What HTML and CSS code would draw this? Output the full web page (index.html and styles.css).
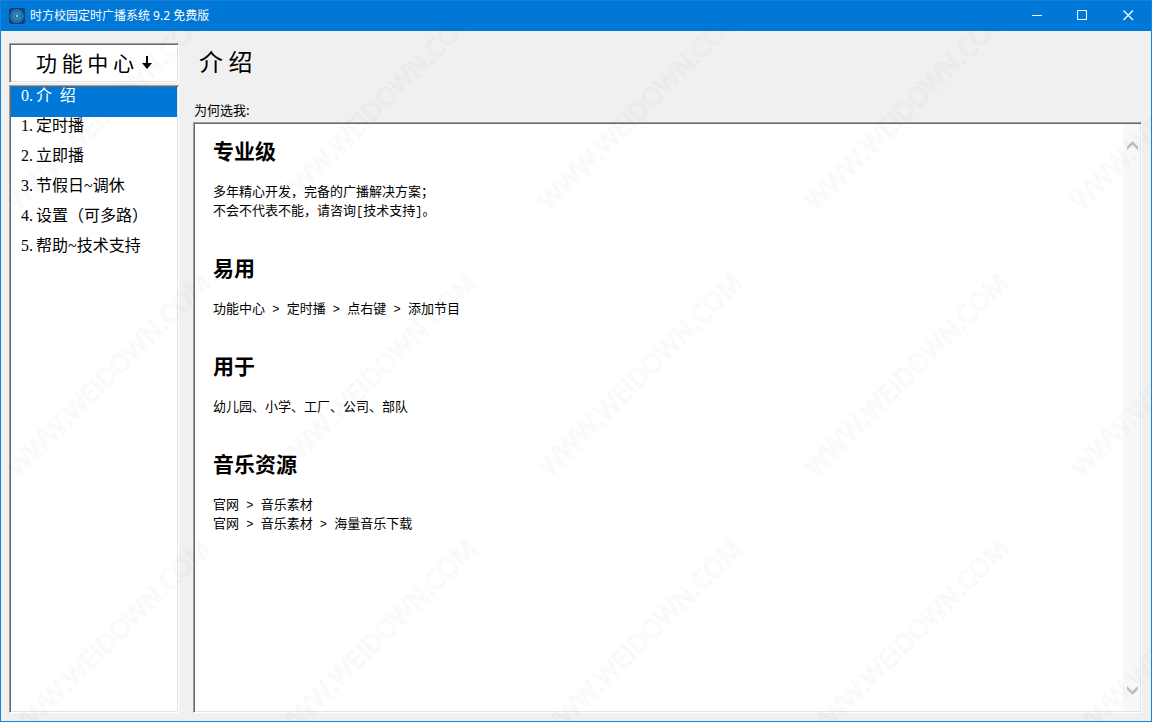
FILE: index.html
```html
<!DOCTYPE html>
<html lang="zh-CN">
<head>
<meta charset="utf-8">
<title>时方校园定时广播系统 9.2 免费版</title>
<link rel="stylesheet" href="styles.css">
</head>
<body>
<div class="window">
  <header class="titlebar">
    <svg class="app-icon" viewBox="0 0 16 16" aria-hidden="true">
      <rect width="16" height="16" rx="2" fill="#1a3f74"/>
      <circle cx="8" cy="8" r="6" fill="#1a5f9a" stroke="#2a80b8" stroke-width="1.500"/>
      <circle cx="8" cy="8" r="3.4" fill="#1b5d94" stroke="#3b9fcb" stroke-width="1.200"/>
      <circle cx="8" cy="8" r="1.400" fill="#7ad0ea"/>
    </svg>
    <span class="caption">时方校园定时广播系统 9.2 免费版</span>
    <div class="window-buttons">
      <button type="button" aria-label="最小化"><svg viewBox="0 0 11 11"><path d="M1 5.500h10"/></svg></button>
      <button type="button" aria-label="最大化"><svg viewBox="0 0 11 11"><path d="M.5 .5h9v9h-9z"/></svg></button>
      <button type="button" aria-label="关闭"><svg viewBox="0 0 11 11"><path class="cross" d="M.5 .5l9.500 9.500M10 .5l-9.500 9.500"/></svg></button>
    </div>
  </header>
  <div class="workspace">
    <aside class="sidebar">
      <div class="sunken center-title">功 能 中 心
        <svg viewBox="0 0 10 15" aria-hidden="true"><path d="M4 1h2v7h4L5 14 0 8h4z"/></svg>
      </div>
      <nav class="sunken menu" aria-label="功能中心">
        <button type="button" class="item selected" aria-current="page"><span class="number">0.</span>介<span class="wide-space"> </span>绍</button>
        <button type="button" class="item"><span class="number">1.</span>定时播</button>
        <button type="button" class="item"><span class="number">2.</span>立即播</button>
        <button type="button" class="item"><span class="number">3.</span>节假日~调休</button>
        <button type="button" class="item"><span class="number">4.</span>设置（可多路）</button>
        <button type="button" class="item"><span class="number">5.</span>帮助~技术支持</button>
      </nav>
    </aside>
    <main class="content">
      <h1>介 绍</h1>
      <p class="label">为何选我:</p>
      <div class="sunken viewer">
        <article class="text">
          <h2>专业级</h2>
          <p>多年精心开发，完备的广播解决方案；<br>不会不代表不能，请咨询<span class="mono">[</span>技术支持<span class="mono">]</span>。</p>
          <h2>易用</h2>
          <p>功能中心<span class="mono"> &gt; </span>定时播<span class="mono"> &gt; </span>点右键<span class="mono"> &gt; </span>添加节目</p>
          <h2>用于</h2>
          <p>幼儿园、小学、工厂、公司、部队</p>
          <h2>音乐资源</h2>
          <p>官网<span class="mono"> &gt; </span>音乐素材<br>官网<span class="mono"> &gt; </span>音乐素材<span class="mono"> &gt; </span>海量音乐下载</p>
        </article>
        <div class="scrollbar">
          <button type="button" aria-label="向上滚动"><svg viewBox="0 0 11 9"><path d="M0 5.500L5.500 0 11 5.500V9L5.500 3.700 0 9z"/></svg></button>
          <button type="button" aria-label="向下滚动"><svg viewBox="0 0 11 9"><path d="M0 3.500L5.500 9 11 3.500V0L5.500 5.300 0 0z"/></svg></button>
        </div>
      </div>
    </main>
  </div>
  <svg class="watermark" aria-hidden="true">
    <defs>
      <pattern id="mark" x="6" y="8" width="266" height="266" patternUnits="userSpaceOnUse">
        <g transform="translate(109 107) rotate(-45)">
          <text class="mark-edge" text-anchor="middle">WWW.WEIDOWN.COM</text>
        </g>
      </pattern>
    </defs>
    <rect width="100%" height="100%" fill="url(#mark)"/>
  </svg>
</div>
</body>
</html>
```
FILE: styles.css
```css
* {
  box-sizing: border-box;
}

body {
  margin: 0;
  color: #000;
  font-family: "Noto Sans CJK SC", sans-serif;
}

button {
  margin: 0;
  padding: 0;
  border: 0;
  background: none;
  color: inherit;
  font: inherit;
}

h1,
h2,
p {
  margin: 0;
  font-weight: 400;
}

.window {
  position: relative;
  display: flex;
  flex-direction: column;
  min-height: 100vh;
  border: 1px solid #1883d7;
  background: #f0f0f0;
}

.titlebar {
  display: flex;
  align-items: center;
  height: 30px;
  padding-left: 8px;
  background: #0078d7;
  color: #fff;
}

.app-icon {
  width: 16px;
  height: 16px;
  margin-right: 5px;
}

.caption {
  flex: 1;
  font: 12px/18px "Noto Sans", "Noto Sans CJK SC", sans-serif;
}

.window-buttons {
  display: flex;
}

.window-buttons button {
  display: flex;
  align-items: flex-start;
  justify-content: center;
  width: 46px;
  height: 30px;
  padding-top: 9px;
}

.window-buttons svg {
  width: 11px;
  height: 11px;
  fill: none;
  stroke: #fff;
}

.window-buttons .cross {
  stroke-width: 1.3px;
}

.workspace {
  flex: 1;
  display: grid;
  grid-template-columns: 170px 1fr;
  gap: 14px;
  padding: 12px 9px 8px 8px;
}

.sunken {
  padding: 1px;
  border: 1px solid;
  border-color: #a0a0a0 #fff #fff #a0a0a0;
  background: #fff;
  box-shadow: inset 1px 1px 0 #696969, inset -1px -1px 0 #e3e3e3;
}

.sidebar,
.content {
  display: flex;
  flex-direction: column;
}

.sidebar {
  gap: 2px;
}

.center-title {
  display: flex;
  align-items: center;
  justify-content: center;
  gap: 8px;
  height: 40px;
  padding-bottom: 3px;
  font-size: 21px;
  line-height: 30px;
}

.center-title svg {
  width: 10px;
  height: 15px;
}

.menu {
  flex: 1;
}

.item {
  display: block;
  width: 100%;
  height: 30px;
  padding: 0 0 12px 10px;
  font: 16px/18px "Liberation Serif", "Noto Sans CJK SC", serif;
  text-align: left;
  white-space: pre;
}

.number {
  display: inline-block;
  width: 15px;
}

.selected {
  background: #0078d7;
  color: #fff;
}

.wide-space {
  font-family: "Liberation Mono", monospace;
  font-size: 13px;
}

.content h1 {
  padding-left: 6px;
  font-size: 24px;
  line-height: 36px;
}

.label {
  margin: 21px 0 2px;
  padding-left: 1px;
  font-size: 13px;
  line-height: 20px;
}

.viewer {
  flex: 1;
  display: flex;
}

.text {
  flex: 1;
  padding: 11px 18px;
  font-size: 13px;
  line-height: 19px;
}

.text h2 {
  margin-bottom: 15px;
  font-size: 21px;
  line-height: 31px;
  font-weight: 700;
}

.text p + h2 {
  margin-top: 33px;
}

.mono {
  font-family: "Liberation Mono", monospace;
  font-size: 12px;
  line-height: 1;
}

.scrollbar {
  display: flex;
  flex-direction: column;
  justify-content: space-between;
  width: 17px;
  background: #f8f8f8;
}

.scrollbar button {
  display: flex;
  align-items: center;
  justify-content: flex-end;
  height: 42px;
  padding-right: 2px;
}

.scrollbar svg {
  width: 11px;
  height: 9px;
  fill: #bfbfbf;
}

.watermark {
  position: absolute;
  inset: -1px;
  width: calc(100% + 2px);
  height: calc(100% + 2px);
  pointer-events: none;
}

.mark-edge {
  fill: none;
  stroke: #000;
  stroke-width: 1px;
  stroke-linejoin: round;
  stroke-opacity: 0.035;
  font: 26px "Open Sans", sans-serif;
}
```
